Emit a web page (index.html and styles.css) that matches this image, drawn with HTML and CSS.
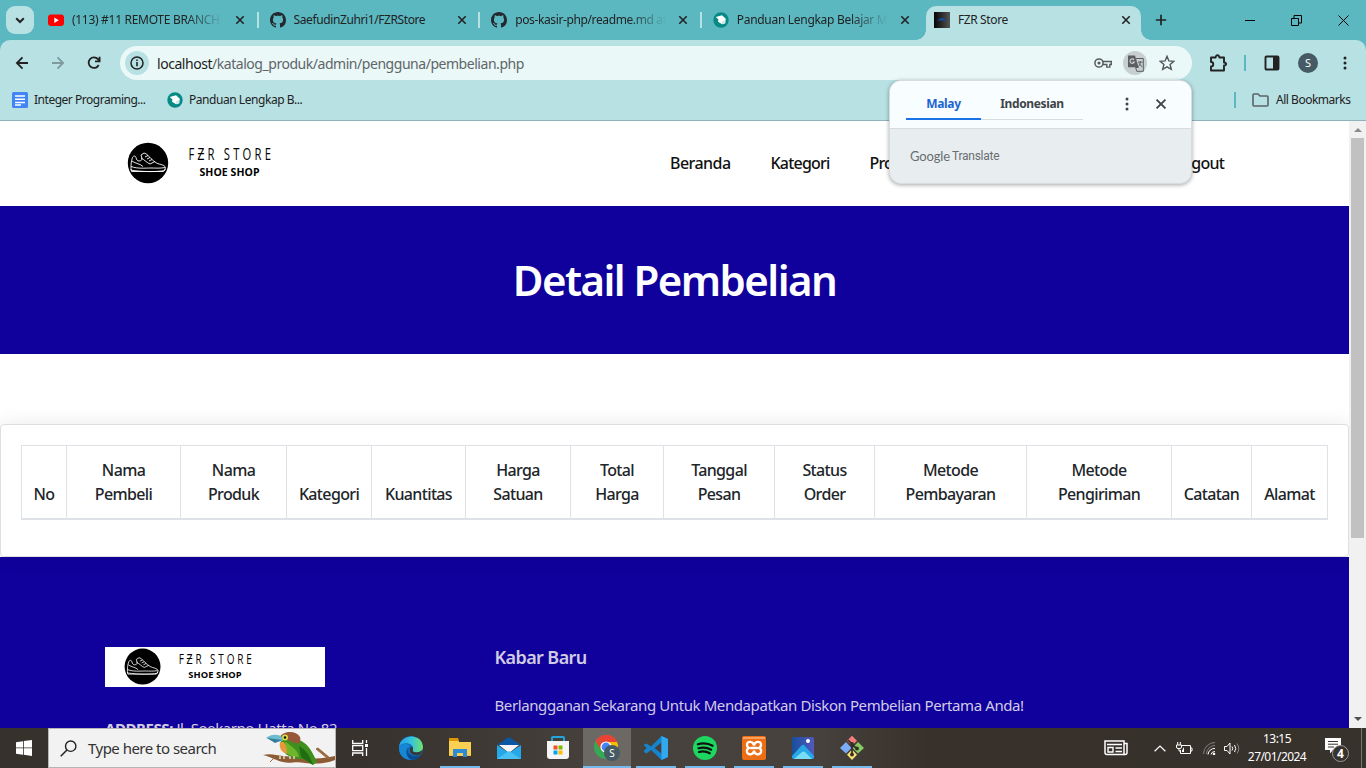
FILE: index.html
```html
<!DOCTYPE html>
<html lang="id">
<head>
<meta charset="utf-8">
<title>FZR Store</title>
<link rel="stylesheet" href="styles.css">
</head>
<body>
<svg class="defs" width="0" height="0">
  <symbol id="x" viewBox="0 0 10 10"><path d="M1.3 1.3 8.7 8.7M8.7 1.3 1.3 8.7" stroke="currentColor" stroke-width="1.6" fill="none"/></symbol>
  <symbol id="github" viewBox="0 0 16 16"><path fill="#24292f" d="M8 0C3.58 0 0 3.58 0 8c0 3.54 2.29 6.53 5.47 7.59.4.07.55-.17.55-.38 0-.19-.01-.82-.01-1.49-2.01.37-2.53-.49-2.69-.94-.09-.23-.48-.94-.82-1.13-.28-.15-.68-.52-.01-.53.63-.01 1.08.58 1.23.82.72 1.21 1.87.87 2.33.66.07-.52.28-.87.51-1.07-1.78-.2-3.64-.89-3.64-3.95 0-.87.31-1.59.82-2.15-.08-.2-.36-1.02.08-2.12 0 0 .67-.21 2.2.82.64-.18 1.32-.27 2-.27s1.36.09 2 .27c1.53-1.04 2.2-.82 2.2-.82.44 1.1.16 1.92.08 2.12.51.56.82 1.27.82 2.15 0 3.07-1.87 3.75-3.65 3.95.29.25.54.73.54 1.48 0 1.07-.01 1.93-.01 2.2 0 .21.15.46.55.38A8.01 8.01 0 0 0 16 8c0-4.42-3.58-8-8-8z"/></symbol>
  <symbol id="panduan" viewBox="0 0 16 16"><circle cx="8" cy="8" r="7.700" fill="#078a86"/><path d="M2.800 5 9 3.200l3.800 3.500-.6 4.600-3 .9L5 9.800l.4-2.300z" fill="#fff"/><path d="m8.800 9.500 3.200-1.500.2 3.300-3 .9z" fill="#cfeae9"/></symbol>
  <symbol id="logo" viewBox="0 0 247 45">
    <circle cx="42" cy="22" r="20.200" fill="#000"/>
    <g fill="none" stroke="#fff" stroke-width=".9" stroke-linejoin="round">
      <path d="M25 27.500c0-4 0-7 1.500-11 1-2 3-2 3.500 0 .5 2 1 3.500 3 3.500s3-1 3-2.500l-1-3.500 3-2 2.500 1c3 3 6 6.500 10 9 4 2 8 1.500 9 4.500l-1 3c-8 1.500-20 1.500-33.500-.300z"/>
      <path d="M25 25.500c7 2.500 14 1.500 20 1.500 5 0 9 .5 14-.5M25 28l.5 2.500h32l2-2.500M35 17c4 2 6 5 9 6l5-2.500M39 16l3-1.500M41 18l3-1.500M43 20l3-1.500M26 20c4 3 8 2.500 11 5.500"/>
    </g>
    <g transform="translate(82.600 19) scale(.68 1)"><text class="brand-name" textLength="121" lengthAdjust="spacing">FƵR STORE</text></g>
    <text class="brand-sub" x="93.500" y="34.700" textLength="60">SHOE SHOP</text>
  </symbol>
</svg>

<header class="tabstrip">
  <div class="tab-search"><svg width="10" height="7" viewBox="0 0 10 7"><path d="m1.200 1.200 3.800 3.800 3.800-3.800" fill="none" stroke="#222" stroke-width="2"/></svg></div>
  <div class="tab"><svg class="fav" viewBox="0 0 16 16"><rect y="2.500" width="16" height="11.500" rx="3" fill="#f00"/><path d="m6.300 5.500 4.500 2.700-4.500 2.700z" fill="#fff"/></svg><span class="tab-title fade t1">(113) #11 REMOTE BRANCH</span><svg class="close"><use href="#x"/></svg></div>
  <div class="tab"><svg class="fav"><use href="#github"/></svg><span class="tab-title t2">SaefudinZuhri1/FZRStore</span><svg class="close"><use href="#x"/></svg></div>
  <div class="tab"><svg class="fav"><use href="#github"/></svg><span class="tab-title fade t3">pos-kasir-php/readme.md at</span><svg class="close"><use href="#x"/></svg></div>
  <div class="tab last"><svg class="fav"><use href="#panduan"/></svg><span class="tab-title fade t4">Panduan Lengkap Belajar Me</span><svg class="close"><use href="#x"/></svg></div>
  <div class="tab active"><svg class="fav" viewBox="0 0 16 16"><defs><linearGradient id="fz"><stop stop-color="#050505"/><stop offset="1" stop-color="#555"/></linearGradient></defs><path fill="url(#fz)" d="M0 0h16v16H0z"/><path d="M2 8.500c3-.5 4-3 7-2.500l4 2.500z" fill="#164a9b"/></svg><span class="tab-title">FZR Store</span><svg class="close"><use href="#x"/></svg></div>
  <svg class="plus" width="12" height="12" viewBox="0 0 12 12"><path d="M6 .8v10.400M.8 6h10.400" stroke="#222" stroke-width="1.700"/></svg>
  <div class="win">
    <svg width="10" height="11"><path d="M0 5.500h10" stroke="#000"/></svg>
    <svg width="11" height="11"><path d="M.5 3.500h7v7h-7zM3 3V.5h7.500V8H8" fill="none" stroke="#000"/></svg>
    <svg width="11" height="11"><path d="m.5.5 10 10m0-10-10 10" stroke="#000"/></svg>
  </div>
</header>

<div class="toolbar">
  <div class="navicons">
    <svg width="14" height="14" viewBox="0 0 14 14"><path d="M13 7H2m5.500-5.600L1.900 7l5.600 5.600" fill="none" stroke="#222" stroke-width="1.800"/></svg>
    <svg width="14" height="14" viewBox="0 0 14 14"><path d="M1 7h11M6.500 1.400 12.100 7l-5.600 5.600" fill="none" stroke="#7e9a9d" stroke-width="1.800"/></svg>
    <svg width="14" height="14" viewBox="0 0 14 14"><path d="M11.700 9A5.300 5.300 0 1 1 11 3.200L12.500 5M12.600.8v4.600H8" fill="none" stroke="#222" stroke-width="1.800"/></svg>
  </div>
  <div class="omnibox">
    <span class="info"><svg width="14" height="14" viewBox="0 0 14 14"><circle cx="7" cy="7" r="6" fill="none" stroke="#222" stroke-width="1.500"/><path d="M7 6v4.300M7 3.500v1.500" stroke="#222" stroke-width="1.600"/></svg></span>
    <span class="url"><b>localhost</b>/katalog_produk/admin/pengguna/pembelian.php</span>
    <svg class="key" width="18" height="10" viewBox="0 0 18 10"><circle cx="5" cy="5" r="4.100" fill="none" stroke="#565b5e" stroke-width="1.500"/><circle cx="5" cy="5" r="1.600" fill="#565b5e"/><path d="M8.700 3.500h8.600v3h-1.500v2.600h-3V6.500H8.700" fill="none" stroke="#565b5e" stroke-width="1.400"/></svg>
    <span class="gt"><svg width="17" height="17" viewBox="0 0 17 17"><path d="M1 .5h7l3.600 11.800H1z" fill="#5b5f62"/><path d="M9 3.500h7.300v12.800H9.800L8.600 12.500h3" fill="none" stroke="#5b5f62"/><path d="M7 4.800a2.200 2.200 0 1 0 .3 2.200H5.400" fill="none" stroke="#ccc" stroke-width="1.200"/><path d="M11 7.200h4.500M13.200 6v1.500c0 2-1 3-2 4m1-3 3 3.500" fill="none" stroke="#5b5f62"/></svg></span>
    <svg class="star" width="16" height="16" viewBox="0 0 16 16"><path d="m8 1.300 1.900 4.600 5 .4-3.800 3.200 1.200 4.900L8 11.800l-4.300 2.600 1.200-4.900L1.100 6.300l5-.4z" fill="none" stroke="#50565a" stroke-width="1.400"/></svg>
  </div>
  <div class="tools">
    <svg width="18" height="18" viewBox="0 0 18 18"><path d="M2 3.500h4.600c0-3 3.800-3 3.800 0H15v5c2.800 0 2.800 3 0 3v5H2v-4c3 0 3-4.500 0-4.500z" fill="none" stroke="#222" stroke-width="1.900" stroke-linejoin="round"/></svg>
    <i class="bar"></i>
    <svg class="side" width="16" height="16" viewBox="0 0 16 16"><rect x="1.500" y="1.500" width="13" height="13" rx="1" fill="none" stroke="#222" stroke-width="1.900"/><path d="M9 1h6v14H9z" fill="#222"/></svg>
    <span class="avatar">S</span>
    <svg width="4" height="16" viewBox="0 0 4 16"><g fill="#222"><circle cx="2" cy="3" r="1.500"/><circle cx="2" cy="8" r="1.500"/><circle cx="2" cy="13" r="1.500"/></g></svg>
  </div>
</div>

<div class="bookmarks">
  <svg class="fav" viewBox="0 0 16 16"><rect width="16" height="16" rx="1.500" fill="#4285f4"/><path d="M3 4h10M3 7.300h10M3 10.500h10M3 13h6" stroke="#fff" stroke-width="1.500"/></svg>
  <span class="bm1">Integer Programing...</span>
  <svg class="fav second"><use href="#panduan"/></svg>
  <span class="bm2">Panduan Lengkap B...</span>
  <i class="bar"></i>
  <svg class="folder" width="17" height="14" viewBox="0 0 17 14"><path d="M1 12V2q0-1 1-1h4l2 2h7q1 0 1 1v8q0 1-1 1H2q-1 0-1-1z" fill="none" stroke="#596468" stroke-width="1.600"/></svg>
  <span class="all">All Bookmarks</span>
</div>

<div class="viewport">
  <div class="page">
    <nav class="site-nav">
      <svg class="site-logo" width="247" height="45"><use href="#logo"/></svg>
      <div class="links"><a>Beranda</a><a>Kategori</a><a>Produk</a><a class="logout">Logout</a></div>
    </nav>
    <section class="hero"><h1>Detail Pembelian</h1></section>
    <main>
      <div class="card">
        <table>
          <colgroup><col class="c1"><col class="c2"><col class="c3"><col class="c4"><col class="c5"><col class="c6"><col class="c7"><col class="c8"><col class="c9"><col class="c10"><col class="c11"><col class="c12"><col class="c13"></colgroup>
          <thead><tr><th>No</th><th>Nama<br>Pembeli</th><th>Nama<br>Produk</th><th>Kategori</th><th>Kuantitas</th><th>Harga<br>Satuan</th><th>Total<br>Harga</th><th>Tanggal<br>Pesan</th><th>Status<br>Order</th><th>Metode<br>Pembayaran</th><th>Metode<br>Pengiriman</th><th>Catatan</th><th>Alamat</th></tr></thead>
        </table>
      </div>
    </main>
    <footer>
      <div class="about">
        <div class="foot-logo"><svg width="220" height="40"><use href="#logo"/></svg></div>
        <p><b>ADDRESS:</b> Jl. Soekarno Hatta No 82</p>
      </div>
      <div class="news"><h2>Kabar Baru</h2><p>Berlangganan Sekarang Untuk Mendapatkan Diskon Pembelian Pertama Anda!</p></div>
    </footer>
  </div>
  <div class="scroll">
    <svg width="8" height="4"><path d="m0 4 4-4 4 4z" fill="#8b8b8b"/></svg>
    <i class="thumb"></i>
    <svg width="8" height="4"><path d="m0 0 4 4 4-4z" fill="#505050"/></svg>
  </div>
</div>

<aside class="translate">
  <div class="tr-head">
    <span class="lang on">Malay</span><span class="lang off">Indonesian</span>
    <svg class="dots" width="4" height="14" viewBox="0 0 4 14"><g fill="#444"><circle cx="2" cy="2" r="1.500"/><circle cx="2" cy="7" r="1.500"/><circle cx="2" cy="12" r="1.500"/></g></svg>
    <svg class="trx" width="12" height="12"><use href="#x"/></svg>
  </div>
  <div class="tr-body"><span class="goog">Google</span><span class="trans">Translate</span></div>
</aside>

<div class="taskbar">
  <div class="start"><svg width="16" height="16" viewBox="0 0 16 16"><path fill="#fff" d="M0 2.200 7 1.200v6.300H0zM7.800 1.100 16 0v7.500H7.800zM0 8.300h7v6.400l-7-1zM7.800 8.300H16V16l-8.200-1.200z"/></svg></div>
  <div class="search">
    <svg width="17" height="17" viewBox="0 0 17 17"><circle cx="10.700" cy="6.200" r="5.200" fill="none" stroke="#222" stroke-width="1.400"/><path d="m7 10-6.300 6.300" stroke="#222" stroke-width="1.500"/></svg>
    <span>Type here to search</span>
    <svg class="bird" width="72" height="37" viewBox="0 0 72 37">
      <path d="M0 25c7-2 13 0 20 1l25 2c10 1 17 0 27-2v4c-10 4-20 4-30 3-10-2-15 1-22-1-6-1-12-5-20-7z" fill="#8c5a33"/><path d="m64 28-11-9 2-1 12 10zM12 27l-5 5" fill="#9b6a43" stroke="#9b6a43"/>
      <path d="M18 9C21 2 31 3 36 10c8 3 12 9 18 22l-4 3-9-6c-9 1-20-3-23-12z" fill="#3e8f1e"/>
      <path d="M36 16c7 4 11 10 14 19l-12-8z" fill="#226d12"/><path d="M23 12c6 5 12 8 13 15-9 0-15-4-17-10z" fill="#6fb52a"/>
      <path d="M17 7C20 1 33 0 37 7c1 3 0 5-2 7l-11-4z" fill="#96573a"/><path d="M17 12q-2 9 7 12 0-7-3-12z" fill="#e8983b"/>
      <path d="M3 8c5-4 10-4 15-2l2 5-7 1z" fill="#6cbbd0"/><path d="m4 8 15 2-7 3z" fill="#347c9a"/><circle cx="22" cy="7.500" r="3" fill="#d8df45"/><circle cx="22" cy="7.500" r="1.300" fill="#111"/>
      <path d="M17 26v3m4-3v3m6-3v3m4-3v3" stroke="#c9bda0" stroke-width="2"/>
    </svg>
  </div>
  <div class="app tv"><svg width="17" height="16" viewBox="0 0 17 16"><path d="M.7 0v3.500h10V0M.7 16v-3h10v3M.7 5.700h10v5H.7zM14.500 0v3m0 5v8" fill="none" stroke="#fff" stroke-width="1.300"/><path d="M13 4h3v3h-3z" fill="#fff"/></svg></div>
  <div class="app edge"><svg width="24" height="24" viewBox="0 0 24 24"><defs><linearGradient id="e1"><stop stop-color="#249de5"/><stop offset=".5" stop-color="#35c1df"/><stop offset="1" stop-color="#71e36a"/></linearGradient></defs><circle cx="12" cy="12" r="12" fill="#116cb9"/><path d="M0 11C1-2 23-4 24 11c0 5-5 6-9 5-2-.5-1-2-1-4C13 6 3 6 0 11z" fill="url(#e1)"/><path d="M0 11c3-4 9-4 11-1-4 2-3 9 4 10 4 0 6-1 7-2-8 11-23 5-22-7z" fill="#1687d4"/><path d="M11 10c-4 2-3 9 4 10 4 0 6-1 7-2-2 4-5 6-9 6-6-2-8-11-2-14z" fill="#0b4b91"/><path d="M14 12c0 2-1 3 1 4 3 1 6 0 8-2l-1 4c-6 3-12 0-11-5 0-2 3-3 3-1z" fill="#3b3732"/></svg></div>
  <div class="app run"><svg width="22" height="20" viewBox="0 0 22 20"><path d="M0 1h9l1 3h12v14H0z" fill="#fbcf52"/><path d="M0 0h9l1 3H0z" fill="#dc9608"/><path d="M4 19v-8h14v8h-4v-4H8v4z" fill="#2b8bd6"/><path d="M0 17.500h4M18 17.500h4" stroke="#f2bc37"/></svg></div>
  <div class="app"><svg width="24" height="22" viewBox="0 0 24 22"><path d="M0 8 12 0l12 8z" fill="#0c57a4"/><path d="M2 8h20L12 16z" fill="#f5f5fa"/><path d="M0 8l12 8 12-8v14H0z" fill="#24a8e9"/><path d="m0 22 12-8 12 8z" fill="#48c0f3"/></svg></div>
  <div class="app"><svg width="24" height="24" viewBox="0 0 24 24"><path d="M6 7V2q0-1 1-1h10q1 0 1 1v5" fill="none" stroke="#21a7df" stroke-width="1.900"/><path d="M1 5h22v15q0 3-3 3H4q-3 0-3-3z" fill="#f5f5f5"/><path fill="#f25022" d="M7.500 9.500h4v4h-4z"/><path fill="#7fba00" d="M12.500 9.500h4v4h-4z"/><path fill="#00a4ef" d="M7.500 14.500h4v4h-4z"/><path fill="#ffb900" d="M12.500 14.500h4v4h-4z"/></svg></div>
  <div class="app run current"><svg width="26" height="26" viewBox="0 0 26 26"><circle cx="12" cy="12" r="12" fill="#34a853"/><path d="M1.600 6C7-3 20-2 23 7H12z" fill="#ea4335"/><path d="M12 7h11c4 9-4 18-11 17l5-9z" fill="#fbbc04"/><path d="M1.600 6 7 15l5-8z" fill="#ea4335"/><circle cx="12" cy="12" r="5.600" fill="#fff"/><circle cx="12" cy="12" r="4.400" fill="#4285f4"/><circle cx="18" cy="18" r="8" fill="#455a64"/><text x="18" y="21.600" class="badge-s">S</text></svg></div>
  <div class="app run"><svg width="24" height="24" viewBox="0 0 24 24"><path d="m17.500 0 6.500 3v18l-6.500 3L7 14 2.500 17.500 0 16V8.500l2.500-1L7 10.500z" fill="#1683cf"/><path d="M17.500 6.500v11L10.500 12zM0 9.500v5L2.800 12z" fill="#45403b"/><path d="m17.500 0 6.500 3v18l-6.500 3z" fill="#32a9ee"/></svg></div>
  <div class="app run"><svg width="24" height="24" viewBox="0 0 24 24"><circle cx="12" cy="12" r="12" fill="#1ed760"/><path d="M4.800 8.300c5-1.500 10.500-1 14.800 1.500M5.500 12.300c4.500-1.300 9-.7 12.700 1.400M6 16c3.700-1 7.500-.6 10.800 1.300" stroke="#111" stroke-width="2.200" fill="none" stroke-linecap="round"/></svg></div>
  <div class="app run"><svg width="24" height="24" viewBox="0 0 24 24"><rect width="24" height="24" rx="2" fill="#ec6d13"/><path d="M1 1h22v2H1z" fill="#f5a15f"/><path d="M8.500 12h7M12 9.500C11.500 5 5 4.500 5 8.700c0 2 1 2.800 2.200 3.300C5.500 12.500 4.500 14 5 16c1 3.500 7 3 7-1.500 0 4.500 6 5 7 1.500.5-2-.5-3.500-2.200-4 1.200-.5 2.200-1.300 2.200-3.300C19 4.500 12.500 5 12 9.500z" fill="none" stroke="#fff" stroke-width="2.300"/></svg></div>
  <div class="app run"><svg width="22" height="22" viewBox="0 0 22 22"><defs><linearGradient id="ph" x2="1" y2="0"><stop stop-color="#174f9d"/><stop offset="1" stop-color="#5358bd"/></linearGradient></defs><rect width="22" height="22" rx="2" fill="url(#ph)"/><path d="M0 19 9.500 8.500q1.500-1.300 3 0L22 19v1q0 2-2 2H2q-2 0-2-2z" fill="#29a7e5"/><path d="m2 22 8-7q1.500-1 3 0l7 7z" fill="#77dcf6"/><circle cx="16" cy="4" r="2" fill="#fff"/></svg></div>
  <div class="app run"><svg width="24" height="24" viewBox="0 0 24 24"><path d="m12 0 5 5-5 5-5-5z" fill="#f37c7c" transform="translate(0 -.3)"/><path d="m6 6 5.500 6L6 17.500 0 12z" fill="#7bacf5"/><path d="m18 6 6 6-6 5.500L12.500 12z" fill="#86cc60"/><path d="m12 13.500 5 5.300-5 5.200-5-5.200z" fill="#fae374"/><path d="m8 4 4 4v11m0-10 5 3.500" fill="none" stroke="#332e28" stroke-width="1.700"/><circle cx="12" cy="8" r="1.900" fill="#332e28"/><circle cx="17" cy="12.500" r="1.900" fill="#332e28"/><circle cx="12" cy="18.500" r="1.900" fill="#332e28"/></svg></div>
  <div class="tray">
    <svg class="newsicon" width="24" height="16" viewBox="0 0 24 16"><path d="M1 1h19v13.500H3q-2 0-2-2zM20 3.500h3v9q0 2-2 2h-2M3 4.500h15M11.500 8H18m-6.500 3.500H18" fill="none" stroke="#fff" stroke-width="1.500"/><path d="M4 7.500h5v4.500H4z" fill="none" stroke="#fff" stroke-width="1.400"/></svg>
    <svg class="chev" width="12" height="7" viewBox="0 0 12 7"><path d="m.6 6.300 5.400-5.300 5.400 5.300" fill="none" stroke="#fff" stroke-width="1.200"/></svg>
    <svg class="batt" width="17" height="13" viewBox="0 0 17 13"><path d="M6 3.500h8.500v8h-10V8M15 6h1v3h-1M.5 3h5v2q0 1.500-1.500 1.500H2Q.5 6.500.5 5zM1.700 0v3m2.600-3v3M3 7v2h1.500" fill="none" stroke="#fff"/><path d="M6 8.500 8 5v5H6z" fill="#fff"/></svg>
    <svg class="wifi" width="13" height="13" viewBox="0 0 13 13"><g fill="none"><path d="M.5 12A11.500 11.500 0 0 1 12 .5M3.500 12A8.500 8.500 0 0 1 12 3.500" stroke="#858079"/><path d="M5 12.500a6.500 6.500 0 0 1 7-6M8 12.500q.5-3 4-3" stroke="#fff"/></g><circle cx="11" cy="12" r="1.300" fill="#fff"/></svg>
    <svg class="vol" width="17" height="13" viewBox="0 0 17 13"><g fill="none" stroke="#fff"><path d="M.5 4.500H3L6 1v11L3 8.500H.5zM8 4.500q1.500 2 0 4M10.500 3q2.500 3.500 0 7"/><path d="M13 1.500q3.500 5 0 10" stroke="#8a857f"/></g></svg>
    <div class="clock"><span class="time">13:15</span><span class="date">27/01/2024</span></div>
    <svg class="notif" width="25" height="25" viewBox="0 0 25 25"><path d="M1 1h16v12H9l-3 3.500V13H1z" fill="#fff"/><path d="M4 4.500h10M4 7.200h10M4 10h6" stroke="#37322d"/><circle cx="16.500" cy="16.500" r="8" fill="#37322d" stroke="#999" stroke-width="1"/><text x="16.500" y="21" class="badge-n">4</text></svg>
    <i class="peek"></i>
  </div>
</div>
</body>
</html>
```
FILE: styles.css
```css
* { box-sizing: border-box; }
body {
  margin: 0; width: 1366px; height: 768px; overflow: hidden; position: relative;
  display: flex; flex-direction: column;
  font-family: "Noto Sans", "Open Sans", sans-serif; font-size: 12px; color: #222;
  background: #fff;
}
svg { display: block; flex: none; }
.defs { position: absolute; }
h1, h2, p { margin: 0; }

/* Tab strip */
.tabstrip { height: 40px; flex: none; background: #5bb8c1; display: flex; align-items: flex-start; box-shadow: 0 10px 0 #5bb8c1; }
.tab-search { width: 28px; height: 28px; margin: 6px 3px 0 6px; border-radius: 9px; background: #b8e1e4; display: grid; place-items: center; flex: none; }
.tab { width: 221.6px; flex: none; height: 40px; display: flex; align-items: center; padding-left: 11px; background: linear-gradient(#b8e1e4, #b8e1e4) right 12px / 2px 16px no-repeat; }
.tab.last { background: none; width: 224.2px; }
.fav { width: 16px; height: 16px; }
.tab-title { width: 151px; margin-left: 8px; white-space: nowrap; overflow: hidden; letter-spacing: -.38px; line-height: 20px; }
.t1 { letter-spacing: -.3px; }
.t2 { letter-spacing: -.4px; }
.t4 { letter-spacing: -.3px; }
.fade { -webkit-mask-image: linear-gradient(90deg, #000 75%, transparent); mask-image: linear-gradient(90deg, #000 75%, transparent); }
.close { width: 10px; height: 10px; margin-left: 12px; color: #222; }
.tab.active { position: relative; width: 215px; height: 34px; margin-top: 6px; padding: 0 0 6px 8px; background: #b8e1e4; border-radius: 10px 10px 0 0; }
.tab.active::before, .tab.active::after { content: ""; position: absolute; bottom: 0; width: 10px; height: 10px; }
.tab.active::before { left: -10px; background: radial-gradient(circle at 0 0, transparent 9.5px, #b8e1e4 10px); }
.tab.active::after { right: -10px; background: radial-gradient(circle at 100% 0, transparent 9.5px, #b8e1e4 10px); }
.plus { margin: 14px 0 0 14px; }
.win { margin-left: auto; display: flex; gap: 36px; padding: 15px 17px 0 0; }

/* Toolbar */
.toolbar { height: 40px; flex: none; display: flex; align-items: flex-start; position: relative; background: #b8e1e4; border-radius: 10px 10px 0 0; }
.navicons { display: flex; gap: 22px; padding: 16px 0 0 15px; width: 120px; flex: none; }
.omnibox { width: 1072px; height: 34px; margin-top: 6px; border-radius: 17px; background: #ebf8f8; display: flex; align-items: center; padding-left: 5px; flex: none; }
.info { width: 24px; height: 24px; border-radius: 50%; background: #b8e1e4; display: grid; place-items: center; }
.url { margin-left: 8px; font-size: 14px; letter-spacing: -.46px; color: #5f6568; width: 937px; white-space: nowrap; }
.url b { font-weight: 400; color: #1c1c1c; }
.gt { margin-left: 11px; width: 24px; height: 24px; border-radius: 50%; background: #c7cfcf; display: grid; place-items: center; }
.star { margin-left: 12px; }
.tools { display: flex; align-items: center; height: 46px; padding-left: 17px; }
.bar { width: 2px; height: 16px; background: #5bb8c1; display: block; }
.tools .bar { margin: 0 18px 0 17px; }
.avatar { width: 20px; height: 20px; margin: 0 25px 0 18px; border-radius: 50%; background: #455a64; color: #fff; font-size: 11px; line-height: 20px; text-align: center; }

/* Bookmarks */
.bookmarks { height: 41px; flex: none; display: flex; align-items: center; padding: 0 14px 1px 12px; background: #b8e1e4; border-bottom: 1px solid #8fb3b8; white-space: nowrap; letter-spacing: -.48px; position: relative; }
.bm1, .bm2 { margin-left: 6px; }
.bm1 { width: 133px; }
.bm2 { letter-spacing: -.45px; }
.bookmarks .bar { margin-left: auto; }
.folder { margin: 0 7px 0 16px; }
.all { width: 76px; }

/* Site */
.viewport { height: 607px; flex: none; display: flex; overflow: hidden; }
.page { width: 1349px; flex: none; overflow: hidden; background: #fff; font-family: "Noto Sans", sans-serif; }
.site-nav { height: 85px; display: flex; align-items: flex-start; padding: 20px 0 0 106px; }
.links { display: flex; width: 554px; margin: 10px 0 0 317px; gap: 40px; font-size: 16px; line-height: 24px; font-weight: 550; color: #111; }
.links a { letter-spacing: -.8px; }
.links a:first-child { letter-spacing: -.55px; }
.logout { margin-left: auto; }
.brand-name { font: 400 16.5px "Open Sans", sans-serif; }
.brand-sub { font: 700 10.5px "Open Sans", sans-serif; }
.hero { height: 148px; background: #10009c; display: grid; place-items: center; }
.hero h1 { color: #fff; font-size: 42px; font-weight: 600; line-height: 50px; letter-spacing: -1.55px; white-space: nowrap; }
main { padding-top: 70px; background: #fff; }
.card { position: relative; height: 133px; border: 1px solid #dfdfdf; border-radius: 4px; background: #fff; padding: 20px; box-shadow: 0 0 20px rgba(0, 0, 0, .09); }
table { table-layout: fixed; width: 1307px; height: 75px; border-spacing: 0; border: solid #dee2e6; border-width: 1px 1px 2px 0; }
th { border-left: 1px solid #dee2e6; padding: 12px 0; vertical-align: bottom; font-size: 16px; line-height: 24px; font-weight: 550; color: #212529; letter-spacing: -.65px; text-align: center; }
.c1 { width: 45px; } .c2 { width: 114px; } .c3 { width: 106px; } .c4 { width: 85px; } .c5 { width: 94px; } .c6 { width: 105px; } .c7 { width: 93px; }
.c8 { width: 111px; } .c9 { width: 100px; } .c10 { width: 152px; } .c11 { width: 145px; } .c12 { width: 80px; } .c13 { width: 76px; }
footer { height: 230px; background: #10009c; display: flex; padding: 90px 0 0 105px; color: #d0cce4; }
.about { width: 389.5px; }
.foot-logo { width: 220px; height: 40px; background: #fff; }
.about p { margin-top: 28px; font-size: 15px; line-height: 26px; letter-spacing: -.42px; }
.news h2 { font-size: 18px; line-height: 20px; font-weight: 600; letter-spacing: -.6px; }
.news p { margin-top: 25px; font-size: 15px; line-height: 26px; letter-spacing: -.4px; white-space: nowrap; }
.scroll { width: 17px; background: #f1f1f1; display: flex; flex-direction: column; align-items: center; padding: 7px 0; }
.thumb { width: 13px; height: 400px; margin: 6px 0 auto; background: #c1c1c1; }

/* Translate popup */
.translate { position: absolute; left: 889px; top: 80px; width: 303px; height: 104px; border: 1px solid #d7dcde; border-radius: 12px; overflow: hidden; background: #e8edf0; box-shadow: 0 1px 4px rgba(0, 0, 0, .35); }
.tr-head { height: 48px; background: #f8fdff; border-bottom: 1px solid #d8dcde; display: flex; align-items: flex-start; padding: 8px 0 0 16px; font-weight: 700; }
.lang { height: 31px; line-height: 30px; text-align: center; letter-spacing: -.35px; }
.on { width: 75px; color: #1b66d2; border-bottom: 2px solid #1a73e8; }
.off { width: 102px; color: #3f4447; border-bottom: 1px solid #d8dcdf; }
.dots { margin: 8px 0 0 42px; }
.trx { margin: 9px 0 0 26px; color: #444; }
.tr-body { padding: 18px 0 0 20px; font: 12px/18px Roboto, sans-serif; color: #686d71; display: flex; gap: 2px; }
.goog { font-family: Lato, sans-serif; font-size: 13px; letter-spacing: -.15px; }
.trans { letter-spacing: -.25px; }

/* Taskbar */
.taskbar { height: 40px; flex: none; display: flex; background: linear-gradient(90deg, #37312c, #37322e 27%, #47423c 45%, #46413c 60%, #37302b 68%, #37322c); }
.start { width: 48px; display: grid; place-items: center; }
.search { width: 288px; height: 40px; background: #f2f2f2; border: 1px solid #b5b5b5; display: flex; align-items: center; padding-left: 11px; flex: none; overflow: hidden; }
.search span { margin-left: 11px; width: 177px; font-size: 15px; letter-spacing: -.52px; color: #333; white-space: nowrap; }
.app { width: 48px; height: 40px; margin-right: 1px; display: grid; place-items: center; flex: none; }
.tv { margin-right: 3px; }
.run { background: linear-gradient(#76b9ed, #76b9ed) 50% 100% / 40px 2px no-repeat; }
.current { background: linear-gradient(#76b9ed, #76b9ed) 0 100% / 48px 2px no-repeat, #6c6864; }
.badge-s { font: 10px "Noto Sans", sans-serif; fill: #fff; text-anchor: middle; }
.badge-n { font: 700 12px "Noto Sans", sans-serif; fill: #fff; text-anchor: middle; }
.tray { margin-left: auto; display: flex; align-items: center; color: #fff; }
.newsicon { margin-right: 26px; }
.chev { margin-right: 10px; }
.batt { margin-right: 10px; }
.wifi { margin-right: 8px; }
.vol { margin-right: 3px; }
.clock { width: 66px; display: flex; flex-direction: column; align-items: center; line-height: 18px; margin-top: -1px; letter-spacing: -.55px; }
.notif { margin: 3px 0 0 14px; }
.peek { width: 1px; height: 40px; margin: 0 4px 0 12px; background: #77736e; }
```
